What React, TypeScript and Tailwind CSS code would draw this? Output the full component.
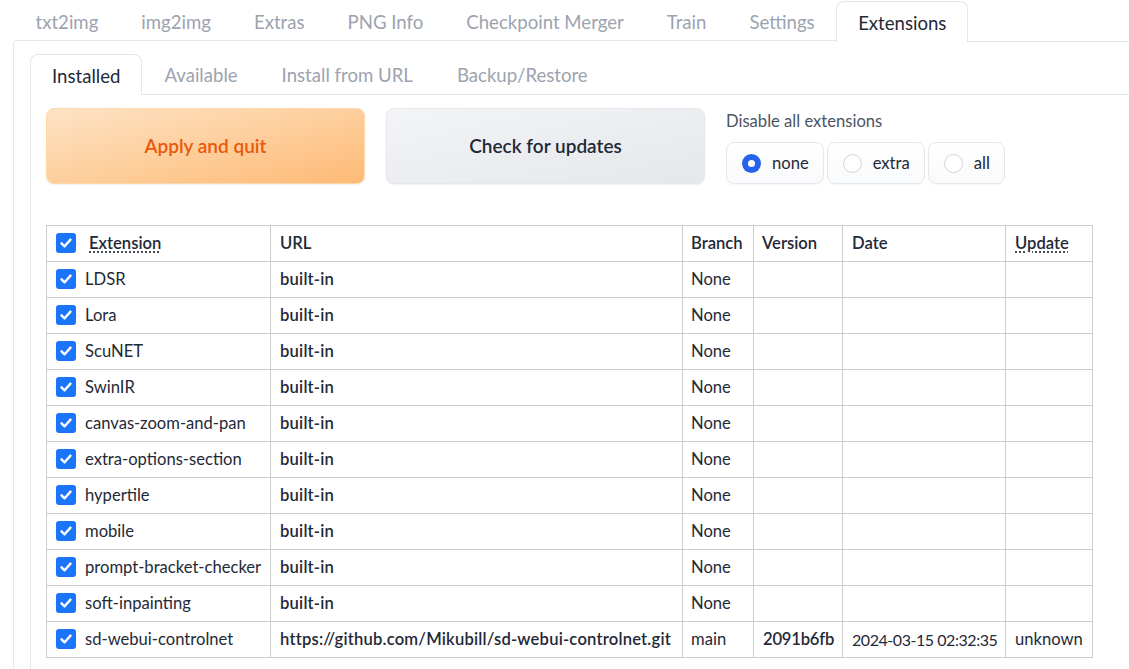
import React from "react";

const topTabs = ["txt2img", "img2img", "Extras", "PNG Info", "Checkpoint Merger", "Train", "Settings", "Extensions"];
const subTabs = ["Installed", "Available", "Install from URL", "Backup/Restore"];

type Row = { name: string; url: string; branch: string; version: string; date: string; update: string };
const builtins = [
  "LDSR",
  "Lora",
  "ScuNET",
  "SwinIR",
  "canvas-zoom-and-pan",
  "extra-options-section",
  "hypertile",
  "mobile",
  "prompt-bracket-checker",
  "soft-inpainting",
];
const rows: Row[] = [
  ...builtins.map((n) => ({ name: n, url: "built-in", branch: "None", version: "", date: "", update: "" })),
  {
    name: "sd-webui-controlnet",
    url: "https://github.com/Mikubill/sd-webui-controlnet.git",
    branch: "main",
    version: "2091b6fb",
    date: "2024-03-15 02:32:35",
    update: "unknown",
  },
];

function Check() {
  return (
    <span className="inline-flex h-[20px] w-[20px] shrink-0 items-center justify-center rounded-[3px] bg-[#1a75f8]">
      <svg width="14" height="14" viewBox="0 0 14 14" fill="none">
        <path d="M2.5 7.3 L5.6 10.3 L11.5 3.6" stroke="white" strokeWidth="2.4" strokeLinecap="round" strokeLinejoin="round" />
      </svg>
    </span>
  );
}

function Radio({ label, selected }: { label: string; selected?: boolean }) {
  return (
    <div className="flex h-[42px] items-center gap-[11px] rounded-[8px] border border-[#e5e7eb] bg-gradient-to-b from-white to-[#f9fafb] pl-[15px] pr-[14px] shadow-[0_1px_2px_rgba(0,0,0,0.04)]">
      {selected ? (
        <span className="flex h-[19px] w-[19px] items-center justify-center rounded-full bg-[#2563eb]">
          <span className="h-[7px] w-[7px] rounded-full bg-white" />
        </span>
      ) : (
        <span className="h-[19px] w-[19px] rounded-full border border-[#d1d5db] bg-white" />
      )}
      <span className="text-[16.6px] text-[#1f2937]">{label}</span>
    </div>
  );
}

export default function App() {
  const font = { fontFamily: "Lato, 'Noto Sans', sans-serif" };
  const cell = "border border-[#cccccc]";
  return (
    <div className="h-[669px] w-[1129px] overflow-hidden bg-white text-[#1f2937]" style={font}>
      {/* top tabs */}
      <div className="flex h-[42px] pl-[14px]">
        {topTabs.map((t) => {
          const active = t === "Extensions";
          return (
            <div
              key={t}
              className={
                active
                  ? "mt-[1px] flex h-[41px] items-center rounded-t-[8px] border border-b-0 border-[#e5e7eb] bg-white px-[21px] pt-[4px] text-[18.6px] text-[#1f2937]"
                  : "flex h-[41px] items-center border-b border-[#e5e7eb] px-[21.5px] pt-[6px] text-[18.6px] text-[#9ca3af]"
              }
            >
              {t}
            </div>
          );
        })}
        <div className="flex-1 border-b border-[#e5e7eb]" />
      </div>

      {/* outer panel */}
      <div className="ml-[13px] h-[627px] border-l border-[#e5e7eb] pl-[16px] pt-[12px]">
        {/* sub tabs */}
        <div className="flex h-[41px]">
          {subTabs.map((t) => {
            const active = t === "Installed";
            return (
              <div
                key={t}
                className={
                  active
                    ? "flex h-[41px] items-center rounded-t-[8px] border border-b-0 border-[#e5e7eb] bg-white px-[21px] pt-[3px] text-[18.6px] text-[#1f2937]"
                    : "flex h-[41px] items-center border-b border-[#e5e7eb] px-[22px] pt-[3px] text-[18.6px] text-[#9ca3af]"
                }
              >
                {t}
              </div>
            );
          })}
          <div className="flex-1 border-b border-[#e5e7eb]" />
        </div>

        {/* inner panel */}
        <div className="h-[600px] border-l border-[#e5e7eb] pl-[15px] pt-[13px]">
          <div className="flex items-start gap-[21px]">
            <button className="flex h-[76px] w-[319px] items-center justify-center rounded-[8px] border border-[#fed7aa] bg-gradient-to-br from-[#fde3c4] to-[#fdba74] text-[19px] font-semibold text-[#ea580c] shadow-[0_1px_2px_rgba(0,0,0,0.06)]">
              Apply and quit
            </button>
            <button className="flex h-[76px] w-[319px] items-center justify-center rounded-[8px] border border-[#e5e7eb] bg-gradient-to-br from-[#f3f4f6] to-[#e5e7eb] text-[19px] font-semibold text-[#1f2937] shadow-[0_1px_2px_rgba(0,0,0,0.06)]">
              Check for updates
            </button>
            <div className="flex flex-col">
              <div className="h-[24px] pt-[1px] text-[16.6px] leading-[24px] text-[#4b5563]">Disable all extensions</div>
              <div className="mt-[10px] flex gap-[3px]">
                <Radio label="none" selected />
                <Radio label="extra" />
                <Radio label="all" />
              </div>
            </div>
          </div>

          <table className="mt-[41px] w-[1046px] table-fixed border-collapse text-[16.6px]">
            <colgroup>
              <col className="w-[224px]" />
              <col className="w-[412px]" />
              <col className="w-[71px]" />
              <col className="w-[89px]" />
              <col className="w-[163px]" />
              <col className="w-[87px]" />
            </colgroup>
            <thead>
              <tr className="h-[36px] text-left">
                <th className={`${cell} px-[9px] font-semibold`}>
                  <div className="flex items-center gap-[13px]">
                    <Check />
                    <span className="underline decoration-dotted underline-offset-[3px]">Extension</span>
                  </div>
                </th>
                <th className={`${cell} px-[9px] font-semibold`}>URL</th>
                <th className={`${cell} px-[8px] font-semibold`}>Branch</th>
                <th className={`${cell} px-[8px] font-semibold`}>Version</th>
                <th className={`${cell} px-[9px] font-semibold`}>Date</th>
                <th className={`${cell} px-[9px] font-semibold`}>
                  <span className="underline decoration-dotted underline-offset-[3px]">Update</span>
                </th>
              </tr>
            </thead>
            <tbody>
              {rows.map((r) => (
                <tr key={r.name} className="h-[36px]">
                  <td className={`${cell} px-[9px]`}>
                    <div className="flex items-center gap-[9px] whitespace-nowrap">
                      <Check />
                      <span>{r.name}</span>
                    </div>
                  </td>
                  <td className={`${cell} whitespace-nowrap px-[9px] font-semibold tracking-[0.2px]`}>{r.url}</td>
                  <td className={`${cell} px-[8px]`}>{r.branch}</td>
                  <td className={`${cell} px-[9px] font-semibold tracking-[-0.2px]`}>{r.version}</td>
                  <td className={`${cell} whitespace-nowrap px-[9px] text-[16px] tracking-[-0.45px]`}>{r.date}</td>
                  <td className={`${cell} px-[9px]`}>{r.update}</td>
                </tr>
              ))}
            </tbody>
          </table>
        </div>
      </div>
    </div>
  );
}
